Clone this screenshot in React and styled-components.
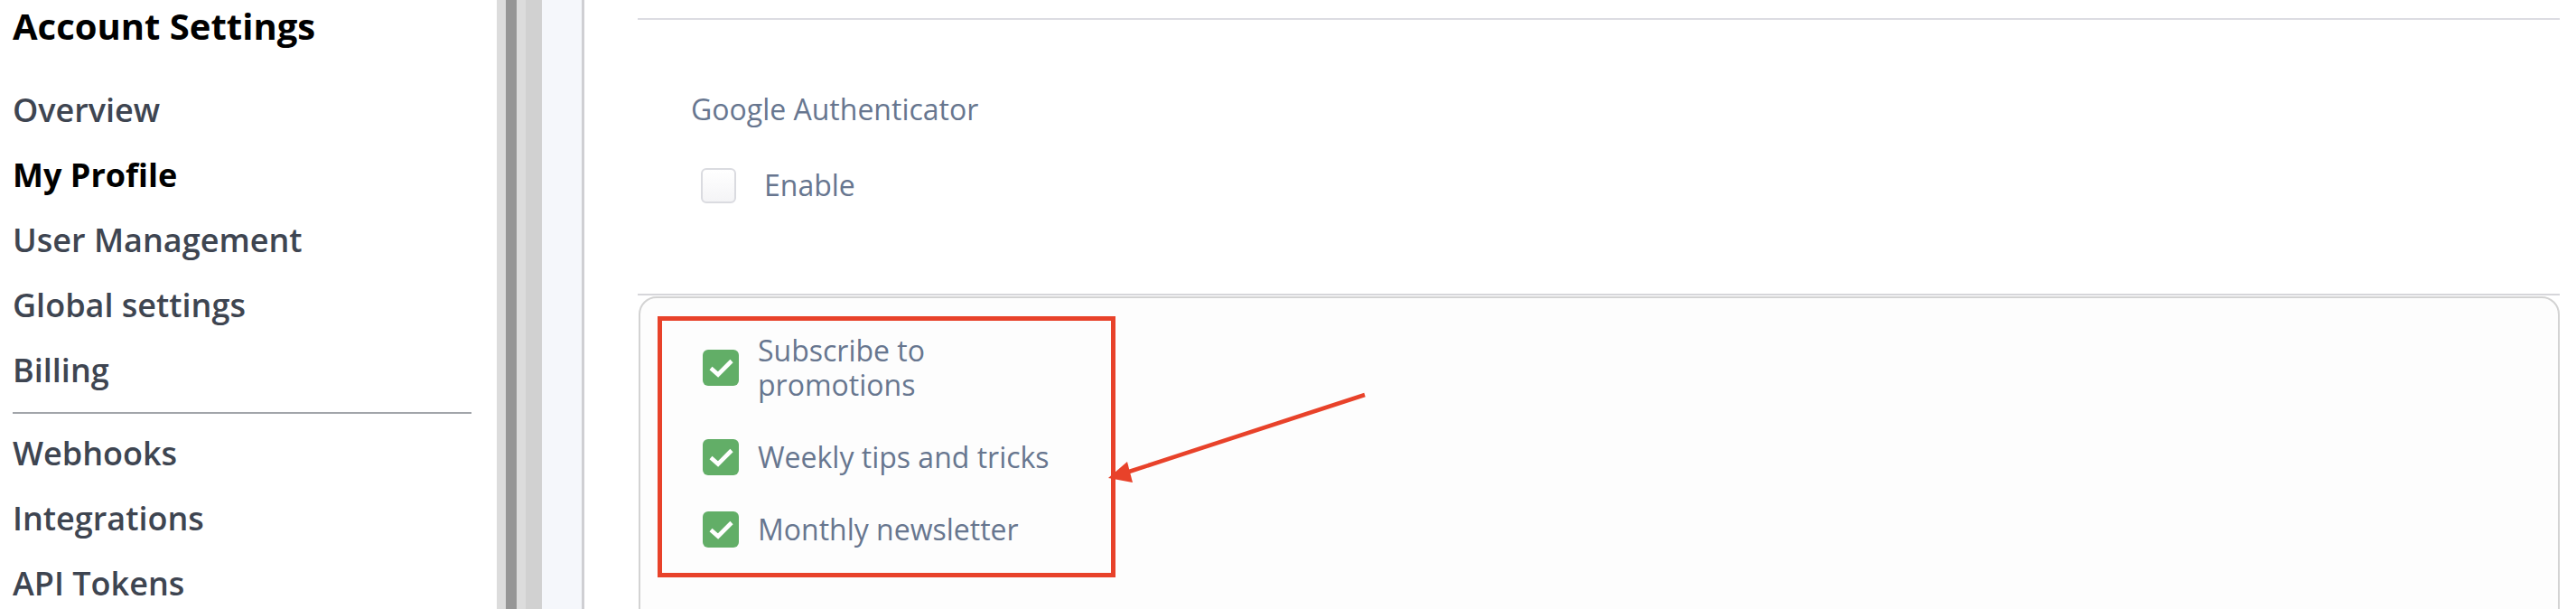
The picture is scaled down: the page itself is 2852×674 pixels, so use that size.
import React from 'react';
import styled, { createGlobalStyle } from 'styled-components';

const GlobalStyle = createGlobalStyle`
  html, body {
    margin: 0;
    padding: 0;
    background: #ffffff;
    overflow: hidden;
  }
  body {
    font-family: 'Open Sans', 'Noto Sans', sans-serif;
  }
`;

const Page = styled.div`
  display: flex;
  flex-direction: row;
  height: 674px;
  overflow: hidden;
`;

const Sidebar = styled.nav`
  flex: 0 0 550px;
  box-sizing: border-box;
  padding: 1px 28px 0 14px;
`;

const SidebarTitle = styled.h2`
  margin: 0 0 30px;
  font-size: 40px;
  font-weight: 700;
  line-height: normal;
  color: #000000;
`;

const NavItem = styled.div`
  font-size: 36px;
  font-weight: ${(p) => (p.$active ? 700 : 600)};
  line-height: 72px;
  color: ${(p) => (p.$active ? '#000000' : '#3e4551')};
  white-space: nowrap;
`;

const NavDivider = styled.hr`
  margin: 10px 0 8px;
  border: 0;
  height: 2px;
  background: #a2a5aa;
`;

const Splitter = styled.div`
  display: flex;
  flex: 0 0 auto;
`;

const Stripe = styled.div`
  width: ${(p) => p.$w}px;
  background: ${(p) => p.$color};
`;

const Gutter = styled.div`
  flex: 0 0 44px;
  background: #f5f7fb;
  border-right: 3px solid #cfcfd3;
`;

const Main = styled.main`
  flex: 1;
  min-width: 0;
  padding: 20px 18px 0 59px;
`;

const TwoFactorSection = styled.section`
  border-top: 2px solid #dcdce2;
  padding: 77px 0 98px 59px;
`;

const FieldLabel = styled.div`
  font-size: 32px;
  line-height: 44px;
  color: #67768f;
`;

const CheckRow = styled.label`
  display: flex;
  align-items: center;
  gap: ${(p) => p.$gap}px;
  margin: ${(p) => p.$margin || 0};
  font-size: 32px;
  line-height: ${(p) => p.$lineHeight}px;
  color: #67768f;
`;

const EmptyBox = styled.span`
  flex: 0 0 auto;
  box-sizing: border-box;
  width: 39px;
  height: 39px;
  border: 2px solid #dadbe0;
  border-radius: 6px;
  background: linear-gradient(#ffffff, #f4f4f6);
`;

const CheckedBox = styled.span`
  flex: 0 0 auto;
  display: flex;
  align-items: center;
  justify-content: center;
  width: 40px;
  height: 40px;
  border-radius: 6px;
  background: #62ae67;
`;

const CheckText = styled.span`
  max-width: 340px;
`;

const PrefsBlock = styled.section`
  border-top: 2px solid #d6d6da;
`;

const Card = styled.div`
  position: relative;
  margin: 1px 0 0 1px;
  min-height: 420px;
  padding: 20px 19px;
  border: 2px solid #d3d3d3;
  border-radius: 20px;
  background: #fdfdfd;
`;

const Highlight = styled.div`
  box-sizing: border-box;
  width: 507px;
  display: flex;
  flex-direction: column;
  gap: 40px;
  padding: 14px 0 28px 45px;
  border: 5px solid #e8422a;
`;

const Arrow = styled.svg`
  position: absolute;
  left: 511px;
  top: 100px;
`;

const Tick = () => (
  <svg width="40" height="40" viewBox="0 0 40 40">
    <path d="M9 20.5 L17 27.5 L32 12.5" fill="none" stroke="#ffffff" strokeWidth="4.6" />
  </svg>
);

const topLinks = ['Overview', 'My Profile', 'User Management', 'Global settings', 'Billing'];
const bottomLinks = ['Webhooks', 'Integrations', 'API Tokens'];
const prefs = ['Subscribe to promotions', 'Weekly tips and tricks', 'Monthly newsletter'];

const App = () => (
  <Page>
    <GlobalStyle />
    <Sidebar>
      <SidebarTitle>Account Settings</SidebarTitle>
      {topLinks.map((l) => (
        <NavItem key={l} $active={l === 'My Profile'}>{l}</NavItem>
      ))}
      <NavDivider />
      {bottomLinks.map((l) => (
        <NavItem key={l}>{l}</NavItem>
      ))}
    </Sidebar>
    <Splitter>
      <Stripe $w={10} $color="#dcdcdc" />
      <Stripe $w={12} $color="#969696" />
      <Stripe $w={10} $color="#dcdcdc" />
      <Stripe $w={18} $color="#d1d1d1" />
    </Splitter>
    <Gutter />
    <Main>
      <TwoFactorSection>
        <FieldLabel>Google Authenticator</FieldLabel>
        <CheckRow $gap={31} $lineHeight={44} $margin="40px 0 0 11px">
          <EmptyBox />
          Enable
        </CheckRow>
      </TwoFactorSection>
      <PrefsBlock>
        <Card>
          <Highlight>
            {prefs.map((p) => (
              <CheckRow key={p} $gap={21} $lineHeight={38.4}>
                <CheckedBox>
                  <Tick />
                </CheckedBox>
                <CheckText>{p}</CheckText>
              </CheckRow>
            ))}
          </Highlight>
          <Arrow width="300" height="110" viewBox="0 0 300 110">
            <line x1="291" y1="7" x2="30" y2="92" stroke="#e8422a" strokeWidth="4.6" />
            <polygon points="7,99 28,81 34,104" fill="#e8422a" />
          </Arrow>
        </Card>
      </PrefsBlock>
    </Main>
  </Page>
);

export default App;
